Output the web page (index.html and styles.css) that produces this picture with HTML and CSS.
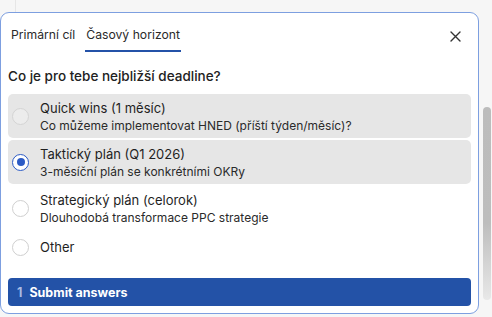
FILE: index.html
```html
<!DOCTYPE html>
<html>
<head>
<meta charset="utf-8">
<link rel="stylesheet" href="styles.css">
</head>
<body>
<div class="page">
  <div class="strip"><div class="strip-line"></div></div>
  <div class="main">
    <div class="card">
      <div class="header">
        <div class="tabs">
          <div class="tab">Primární cíl</div>
          <div class="tab active">Časový horizont</div>
        </div>
        <svg class="close" width="11" height="11" viewBox="0 0 11 11"><path d="M1 1L10 10M10 1L1 10" stroke="#333" stroke-width="1.4" stroke-linecap="round"/></svg>
      </div>
      <div class="question">Co je pro tebe nejbližší deadline?</div>
      <div class="options">
        <div class="option hover">
          <span class="radio"></span>
          <div class="texts">
            <div class="title">Quick wins (1 měsíc)</div>
            <div class="desc">Co můžeme implementovat HNED (příští týden/měsíc)?</div>
          </div>
        </div>
        <div class="option selected">
          <span class="radio on"></span>
          <div class="texts">
            <div class="title">Taktický plán (Q1 2026)</div>
            <div class="desc">3-měsíční plán se konkrétními OKRy</div>
          </div>
        </div>
        <div class="option">
          <span class="radio"></span>
          <div class="texts">
            <div class="title">Strategický plán (celorok)</div>
            <div class="desc">Dlouhodobá transformace PPC strategie</div>
          </div>
        </div>
        <div class="option single">
          <span class="radio"></span>
          <div class="texts">
            <div class="title">Other</div>
          </div>
        </div>
      </div>
      <div class="submit"><span class="num">1</span><span class="label">Submit answers</span></div>
    </div>
    <div class="scroll"><div class="thumb"></div></div>
  </div>
</div>
</body>
</html>
```
FILE: styles.css
```css
* { box-sizing: border-box; }
html, body { margin: 0; padding: 0; }
body {
  background: #f6f6f6;
  font-family: Inter, "Liberation Sans", Arial, sans-serif;
  color: #1f1f1f;
  width: 492px;
  height: 317px;
  overflow: hidden;
}
.strip { height: 12px; padding-left: 15px; }
.strip-line { width: 1px; height: 12px; background: #e6e6e6; }
.main { display: flex; align-items: flex-start; }
.card {
  width: 479px;
  height: 302px;
  background: #fff;
  border: 1px solid #7d9fe0;
  border-radius: 9px;
  padding: 0 7px 0 7px;
  display: flex;
  flex-direction: column;
}
.header {
  display: flex;
  justify-content: space-between;
  align-items: flex-start;
  padding: 14px 10px 0 2px;
}
.tabs { display: flex; gap: 9px; }
.tab {
  font-size: 12.2px;
  line-height: 16px;
  padding: 0 1px 7px 1px;
  color: #2a2a2a;
  border-bottom: 2px solid transparent;
}
.tab.active { border-bottom-color: #2452a8; }
.close { margin-top: 4px; }
.question {
  font-size: 13.5px;
  line-height: 18px;
  font-weight: 500;
  color: #222;
  margin: 15px 0 0 0;
}
.options { display: flex; flex-direction: column; gap: 2px; margin-top: 9px; }
.option {
  display: flex;
  align-items: center;
  gap: 11px;
  padding: 0 4px;
  border-radius: 5px;
  height: 44px;
}
.option.hover, .option.selected { background: #e6e6e6; }
.option.single { height: 30px; }
.radio {
  width: 17px;
  height: 17px;
  border-radius: 50%;
  border: 1px solid #cfcfcf;
  background: #fff;
  flex: none;
}
.option.hover .radio { background: #ececec; border-color: #d4d4d4; }
.radio.on {
  border: 1.5px solid #2c5bc5;
  display: flex;
  align-items: center;
  justify-content: center;
}
.radio.on::after {
  content: "";
  width: 8px;
  height: 8px;
  border-radius: 50%;
  background: #2c5bc5;
}
.texts { display: flex; flex-direction: column; gap: 2px; }
.title { font-size: 13px; line-height: 16px; color: #1f1f1f; }
.desc { font-size: 12px; line-height: 15px; color: #2a2a2a; }
.submit {
  margin-top: 16px;
  height: 28px;
  background: #2352a7;
  border-radius: 4px;
  display: flex;
  align-items: center;
  padding-left: 9px;
  gap: 7px;
  font-size: 12.5px;
}
.num { color: #a9bbe3; font-weight: 700; }
.label { color: #fff; font-weight: 700; }
.scroll {
  width: 13px;
  height: 305px;
  padding: 95px 1px 0 4px;
}
.thumb {
  width: 8px;
  height: 193px;
  border-radius: 4px;
  background: linear-gradient(#bcbcbc, #bdbdbd 60%, #e8e8e8);
}
```
